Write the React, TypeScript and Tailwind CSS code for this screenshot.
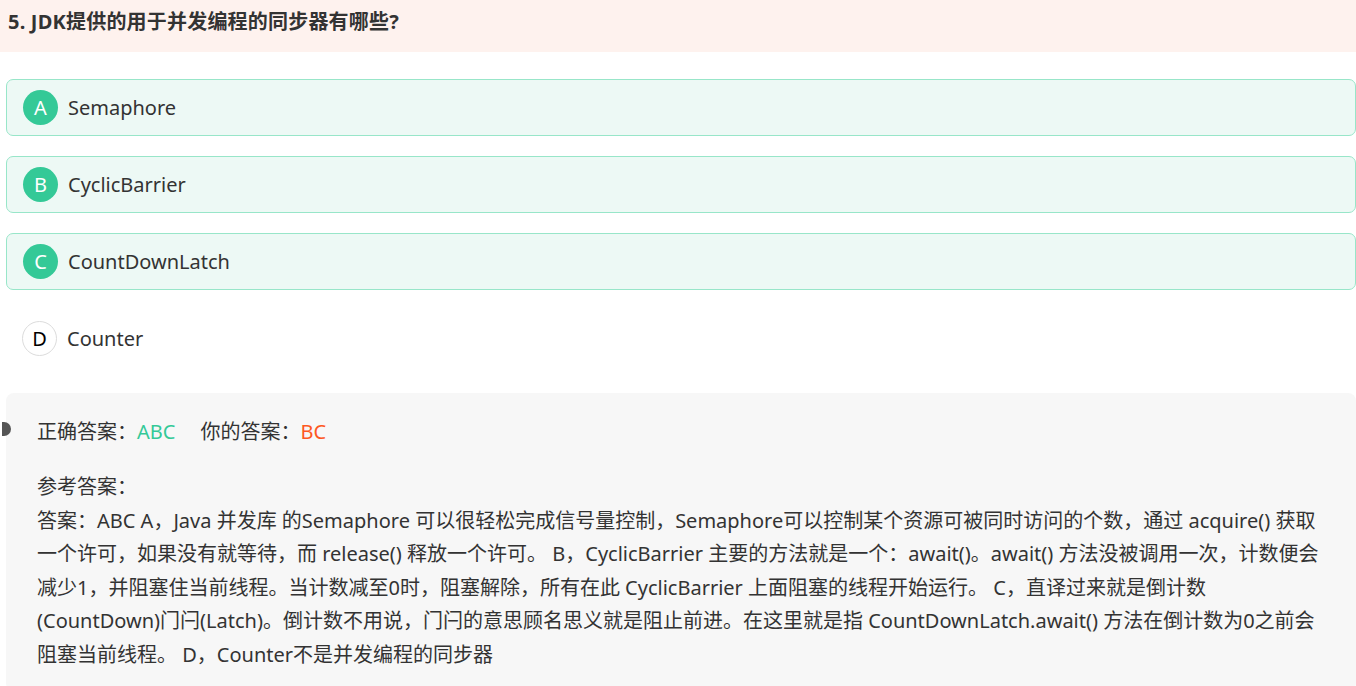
const options = [
  { key: "A", label: "Semaphore", picked: true },
  { key: "B", label: "CyclicBarrier", picked: true },
  { key: "C", label: "CountDownLatch", picked: true },
  { key: "D", label: "Counter", picked: false },
];

const analysis = [
  "答案：ABC A，Java 并发库 的Semaphore 可以很轻松完成信号量控制，Semaphore可以控制某个资源可被同时访问的个数，通过 acquire() 获取",
  "一个许可，如果没有就等待，而 release() 释放一个许可。 B，CyclicBarrier 主要的方法就是一个：await()。await() 方法没被调用一次，计数便会",
  "减少1，并阻塞住当前线程。当计数减至0时，阻塞解除，所有在此 CyclicBarrier 上面阻塞的线程开始运行。 C，直译过来就是倒计数",
  "(CountDown)门闩(Latch)。倒计数不用说，门闩的意思顾名思义就是阻止前进。在这里就是指 CountDownLatch.await() 方法在倒计数为0之前会",
  "阻塞当前线程。 D，Counter不是并发编程的同步器",
];

export default function App() {
  return (
    <div className="w-[1356px] h-[686px] overflow-hidden bg-white text-[#333] font-['Noto_Sans','Noto_Sans_CJK_SC',sans-serif]">
      <div className="h-[52px] bg-[#fef2ee] pl-2 pt-[8px]">
        <h3 className="text-[20px] leading-[28px] font-bold tracking-[0.2px] text-[#333]">5. JDK提供的用于并发编程的同步器有哪些?</h3>
      </div>

      <div className="pl-1.5 pt-[27px] flex flex-col gap-[20px]">
        {options.map((o) =>
          o.picked ? (
            <div key={o.key} className="h-[57px] w-[1350px] rounded-[7px] border border-[#98e6c9] bg-[#edf9f5] flex items-center pl-[16px]">
              <span className="w-[35px] h-[35px] rounded-full bg-[#34c997] text-white text-[20px] flex items-center justify-center">{o.key}</span>
              <span className="ml-[10px] text-[20px]">{o.label}</span>
            </div>
          ) : (
            <div key={o.key} className="h-[57px] flex items-center pl-[16px]">
              <span className="w-[35px] h-[35px] rounded-full border border-[#dcdcdc] bg-white text-black text-[20px] flex items-center justify-center">{o.key}</span>
              <span className="ml-[10px] text-[20px]">{o.label}</span>
            </div>
          )
        )}
      </div>

      <div className="relative mt-[26px] ml-1.5 w-[1350px] rounded-[8px] bg-[#f7f7f7] pl-[31px] pt-[24px] pb-[20px] text-[20px]">
        <span className="absolute -left-[4px] top-[29px] w-[9px] h-[14px] rounded-r-full bg-[#555]" />
        <div className="flex items-center leading-[30px]">
          <span>正确答案：</span>
          <span className="text-[#34c997]">ABC</span>
          <span className="ml-[25px]">你的答案：</span>
          <span className="text-[#fe5722]">BC</span>
        </div>
        <div className="mt-[23px] leading-[33.5px]">
          <div>参考答案：</div>
          {analysis.map((line, i) => (
            <div key={i} className="whitespace-nowrap">{line}</div>
          ))}
        </div>
      </div>
    </div>
  );
}
